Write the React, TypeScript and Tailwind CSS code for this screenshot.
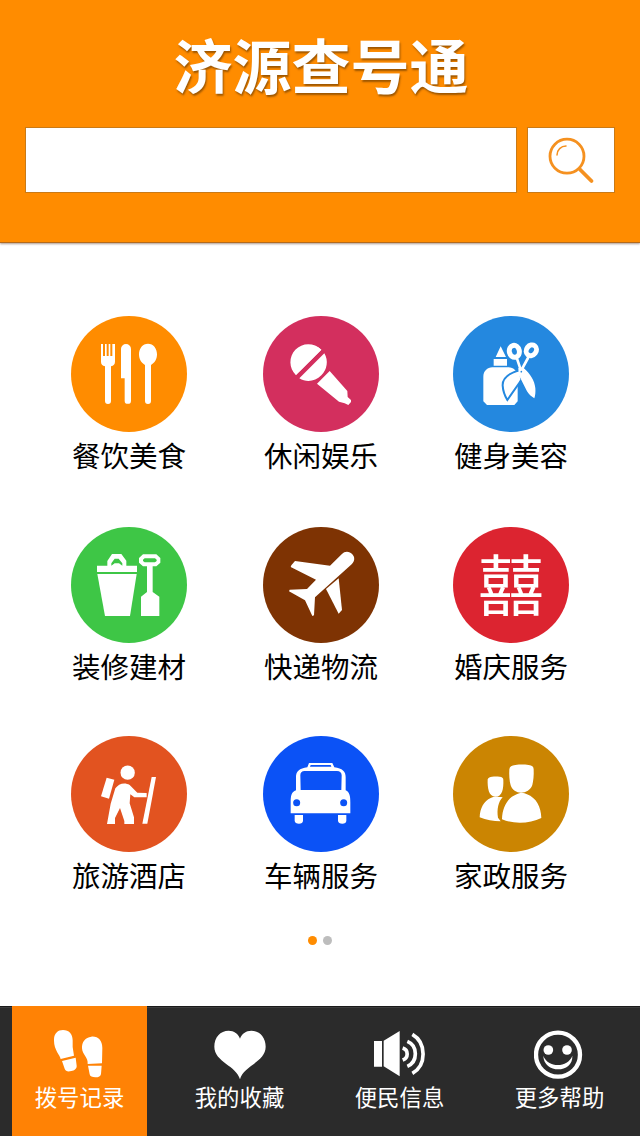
import React, { useState } from 'react';

interface Category {
  name: string;
  color: string;
  icon: React.ReactNode;
}

interface NavItem {
  name: string;
  icon: React.ReactNode;
}

const categories: Category[] = [
  {
    name: '餐饮美食',
    color: 'bg-[#ff8c00]',
    icon: (
      <svg viewBox="33 30 348 348" className="w-full h-full" fill="#fff">
        <path d="M123 114h6v36h6v-36h5v36h6v-36h5v36h6v-36h8v53c0 8-4 12-12 14v104a9 9 0 0 1-18 0V181c-8-2-12-6-12-14z" />
        <path d="M183 129a15 15 0 0 1 30 0v155a9.500 9.500 0 0 1-19 0v-67h-11z" />
        <path d="M264 113c16 0 27 14 27 32 0 15-7 26-18 32v108a9 9 0 0 1-18 0V177c-11-6-18-17-18-32 0-18 11-32 27-32z" />
      </svg>
    ),
  },
  {
    name: '休闲娱乐',
    color: 'bg-[#d32f5e]',
    icon: (
      <svg viewBox="39 30 348 348" className="w-full h-full" fill="#fff">
        <path d="M138 207a54 54 0 0 1 76-76z" />
        <path d="M138 207c-22-20-22-55-2-76s55-23 78 0z" />
        <path d="M223 142a54 54 0 0 1 -9 66c-18 18-44 23-66 9z" />
        <path d="M239 195l53 60 1 18 10 9v6l-8 9-11-5-17-5-66-54z" />
      </svg>
    ),
  },
  {
    name: '健身美容',
    color: 'bg-[#2488df]',
    icon: (
      <svg viewBox="39 30 348 348" className="w-full h-full">
        <path fill="#fff" d="M182 121l16 32h-31zM161 159h40v20h-40zM157 184h48c16 0 28 12 28 28v74l-10 11h-82l-11-11v-74c0-16 12-28 27-28z" />
        <path fill="#fff" stroke="#2488df" strokeWidth="6" d="M240 193c-33 8-53 24-52 46 1 15 6 30 14 43l42-60z" />
        <path fill="#2488df" d="M234 240l6-18 8 16-8 12-6 0z" />
        <path fill="#fff" d="M235 186l16 0c20 18 33 38 35 60 1 11 0 22-3 31-9-5-17-12-22-21l-25-50z" />
        <g fill="none" stroke="#fff" strokeLinecap="round">
          <path strokeWidth="8" d="M264 156l-24 44M231 158l14 42" />
          <ellipse cx="223" cy="136" rx="15" ry="18" strokeWidth="15" transform="rotate(-12 223 136)" />
          <ellipse cx="274" cy="133" rx="14.500" ry="17" strokeWidth="15" transform="rotate(38 274 133)" />
        </g>
        <circle cx="244" cy="197" r="2.500" fill="#2488df" />
      </svg>
    ),
  },
  {
    name: '装修建材',
    color: 'bg-[#3ec646]',
    icon: (
      <svg viewBox="33 33 348 348" className="w-full h-full" fill="#fff">
        <path d="M111 149h31v-14l14-21h28l15 20v15h32v19H111z" />
        <path fill="#3ec646" d="M154 149v-7l10-14h12l11 14v7l-10-7h-13z" />
        <path d="M112 174h118l-20 126h-75z" />
        <path fillRule="evenodd" d="M249 115h40l12 11v14l-12 11h-11v77l20 14v58h-55v-58l18-14v-77h-12l-12-11v-14zM254 127l-5 4v4l5 4h31l5-4v-4l-5-4z" />
      </svg>
    ),
  },
  {
    name: '快递物流',
    color: 'bg-[#7e3303]',
    icon: (
      <svg viewBox="39 33 348 348" className="w-full h-full" fill="#fff">
        <path d="M275 115c10-11 24-9 32 0s8 20-2 30L195 244l-3 54-5 2-22-47-48-27 2-5 52-2 27-28-76-38 2-5 11-13 105 14z" />
        <path d="M266 187l10 95-10 11-38-74z" />
      </svg>
    ),
  },
  {
    name: '婚庆服务',
    color: 'bg-[#dc2430]',
    icon: (
      <span className="-mt-[9px] text-[66px] leading-[116px] font-normal text-white">囍</span>
    ),
  },
  {
    name: '旅游酒店',
    color: 'bg-[#e25320]',
    icon: (
      <svg viewBox="33 30 348 348" className="w-full h-full" fill="#fff">
        <circle cx="203" cy="140" r="21.500" />
        <path d="M140 155l23 6-16 57-24-7z" />
        <path d="M166 187c9-13 27-20 43-10l23 23 28 1v13l-37 0-12-9-2 27 13 42v20h-29v-9l-13-39-15 30v18h-24l11-61z" />
        <path d="M275 153h13l-26 140h-15z" />
      </svg>
    ),
  },
  {
    name: '车辆服务',
    color: 'bg-[#0b52f6]',
    icon: (
      <svg viewBox="39 30 348 348" className="w-full h-full" fill="#fff">
        <path fillRule="evenodd" d="M172 124l5-13h70l6 13c24 3 34 12 34 30v39c12 5 14 18 14 36v33H122v-33c0-19 2-31 16-36v-39c0-18 10-27 34-30zM182 117l-2 5h64l-2-5zM164 135c-9 0-13 5-13 13l1 44h122l1-44c0-8-5-13-14-13z" />
        <circle cx="140" cy="230" r="10.500" fill="#0b52f6" />
        <circle cx="281" cy="230" r="10.500" fill="#0b52f6" />
        <path d="M134 267h25v17c0 5-5 9-12 9s-13-4-13-9zM264 267h25v17c0 5-5 9-12 9s-13-4-13-9z" />
      </svg>
    ),
  },
  {
    name: '家政服务',
    color: 'bg-[#cb8502]',
    icon: (
      <svg viewBox="39 30 348 348" className="w-full h-full" fill="#fff">
        <path d="M208 130c1-8 7-12 18-13 15-2 25-2 40 0 10 1 15 5 15 13 1 18-1 36-4 47-9 28-55 33-65 1-4-13-5-33-4-48z" />
        <path d="M186 280c1-38 18-65 44-75 10-6 21-6 31 0 28 11 42 37 43 71-34 17-83 19-118 4z" />
        <path d="M143 160c2-6 7-7 13-8 8-1 14-1 23 0 7 1 11 3 11 9 1 28-3 51-24 51-20 0-24-26-23-52z" />
        <path d="M119 274c1-28 13-49 33-58 9-5 19-4 36-2-13 13-18 36-14 61l8 11c-22 0-44-4-63-12z" />
      </svg>
    ),
  },
];

const navItems: NavItem[] = [
  {
    name: '拨号记录',
    icon: (
      <svg viewBox="162 96 156 156" className="w-[52px] h-[52px]" fill="#fff">
        <path d="M162 134c-1-20 10-32 27-32 18 0 29 12 29 31v20l4 26-40 10c-2-12-20-27-20-55z" />
        <path d="M186 195l41-10 3 24c1 9-7 14-16 16-10 3-17 1-20-7z" />
        <path d="M246 157c-1-19 10-33 28-35 20-2 33 12 33 34l-1 46-43 2c2-20-16-28-17-47z" />
        <path d="M264 209h41l-2 25c-1 7-7 10-17 10-9 0-16-2-17-9z" />
      </svg>
    ),
  },
  {
    name: '我的收藏',
    icon: (
      <svg viewBox="642 96 156 156" className="w-[52px] h-[52px]" fill="#fff">
        <path d="M720 128c5-15 18-24 34-24 25 0 43 20 43 48 0 46-67 57-77 98-10-41-77-52-77-98 0-28 18-48 43-48 16 0 29 9 34 24z" />
      </svg>
    ),
  },
  {
    name: '便民信息',
    icon: (
      <svg viewBox="162 324 156 156" className="w-[52px] h-[52px]">
        <path fill="#fff" d="M162 363h24v77h-24zM191 362l48-29v136l-48-30z" />
        <g fill="none" stroke="#fff" strokeWidth="11">
          <path d="M248 384c18 6 18 29 0 36" />
          <path d="M262 364c32 13 32 62 0 75" />
          <path d="M277 343c43 25 43 93 0 117" />
        </g>
      </svg>
    ),
  },
  {
    name: '更多帮助',
    icon: (
      <svg viewBox="642 324 156 156" className="w-[52px] h-[52px]">
        <circle cx="714" cy="404" r="66" fill="none" stroke="#fff" strokeWidth="13" />
        <circle cx="685" cy="390" r="14.500" fill="#fff" />
        <circle cx="741" cy="390" r="14.500" fill="#fff" />
        <path fill="#fff" d="M670 407c13 37 73 38 87 0 3 54-86 55-87 0z" />
      </svg>
    ),
  },
];

const App: React.FC = () => {
  const [active, setActive] = useState(0);

  return (
    <div className="w-[640px] h-[1136px] flex flex-col overflow-hidden bg-white font-['Noto_Sans_CJK_SC',sans-serif]">
      {/* Header */}
      <header className="h-[243px] shrink-0 flex flex-col bg-[#ff8c00] border-b border-[#b36a1c] shadow-[0_1px_2px_rgba(90,50,30,0.5)]">
        <h1 className="mt-[34px] pl-[2px] h-[60px] text-center text-[59px] leading-[60px] font-bold text-white [text-shadow:1px_2px_2px_rgba(90,50,0,0.6)]">
          济源查号通
        </h1>
        <div className="mt-[33px] pl-[25px] flex gap-[10px]">
          <input
            type="text"
            className="w-[492px] h-[66px] px-4 text-3xl bg-white border border-[#c97a17] outline-none"
          />
          <button className="w-[88px] h-[66px] bg-white border border-[#c97a17] flex items-center justify-center">
            <svg viewBox="528 128 86 64" className="w-full h-full" fill="none" stroke="#f59120" strokeLinecap="round">
              <circle cx="567" cy="156.200" r="17" strokeWidth="2.800" />
              <path strokeWidth="1.500" d="M557 155c0-5 4-9 9-9" />
              <path strokeWidth="3.800" d="M580 169.500l11.500 11.500" />
            </svg>
          </button>
        </div>
      </header>

      {/* Categorias */}
      <main className="flex-1 pt-[73px]">
        <div className="pl-[71px] grid grid-cols-[192px_190px_116px] grid-rows-[211px_209px_200px]">
          {categories.map((item) => (
            <div key={item.name} className="w-[116px] flex flex-col items-center">
              <div className={`w-[116px] h-[116px] rounded-full overflow-hidden flex items-center justify-center ${item.color}`}>
                {item.icon}
              </div>
              <span className="mt-[2px] text-[28.5px] leading-[42px] whitespace-nowrap text-black">{item.name}</span>
            </div>
          ))}
        </div>
        <div className="flex justify-center gap-[6px]">
          <span className="w-[9px] h-[9px] rounded-full bg-[#ff8c00]" />
          <span className="w-[9px] h-[9px] rounded-full bg-[#bdbdbd]" />
        </div>
      </main>

      {/* Menu inferior */}
      <nav className="h-[130px] shrink-0 flex bg-[#2b2b2b] shadow-[inset_0_1px_0_#1a1a1a,inset_0_2px_0_#3c3c3c]">
        {navItems.map((item, i) => (
          <div key={item.name} className="w-40 flex pl-3 pr-[13px]">
            <button
              onClick={() => setActive(i)}
              className={`flex-1 flex flex-col items-center pt-[22px] ${active === i ? 'bg-[#ff8205]' : ''}`}
            >
              {item.icon}
              <span className="-mt-px text-[22.4px] leading-[34px] whitespace-nowrap text-white">{item.name}</span>
            </button>
          </div>
        ))}
      </nav>
    </div>
  );
};

export default App;
